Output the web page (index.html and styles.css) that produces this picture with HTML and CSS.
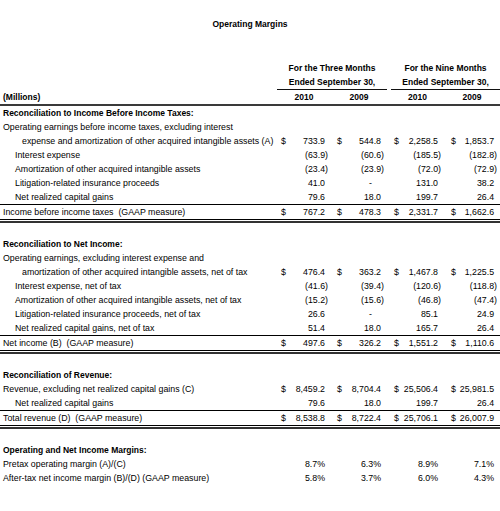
FILE: index.html
```html
<!DOCTYPE html>
<html lang="en">
<head>
    <meta charset="UTF-8">
    <meta name="viewport" content="width=device-width, initial-scale=1.0">
    <title>Operating Margins</title>
    <link rel="stylesheet" href="styles.css">
</head>
<body>
    <h1 class="title">Operating Margins</h1>

    <table class="margins">
        <colgroup>
            <col class="col-label">
            <col class="col-g1">
            <col class="col-g2">
            <col class="col-gap">
            <col class="col-g3">
            <col class="col-g4">
        </colgroup>
        <thead>
            <tr>
                <th></th>
                <th colspan="2" class="period">For the Three Months</th>
                <th></th>
                <th colspan="2" class="period">For the Nine Months</th>
            </tr>
            <tr>
                <th></th>
                <th colspan="2" class="period ended">Ended September 30,</th>
                <th></th>
                <th colspan="2" class="period ended">Ended September 30,</th>
            </tr>
            <tr class="years">
                <th class="label">(Millions)</th>
                <th>2010</th>
                <th>2009</th>
                <th></th>
                <th>2010</th>
                <th>2009</th>
            </tr>
        </thead>
        <tbody>
            <!-- Reconciliation to Income Before Income Taxes -->
            <tr class="section">
                <td class="label" colspan="6">Reconciliation to Income Before Income Taxes:</td>
            </tr>
            <tr>
                <td class="label" colspan="6">Operating earnings before income taxes, excluding interest</td>
            </tr>
            <tr>
                <td class="label wrap">expense and amortization of other acquired intangible assets (A)</td>
                <td class="v"><span class="cur">$</span>733.9</td>
                <td class="v"><span class="cur">$</span>544.8</td>
                <td></td>
                <td class="v"><span class="cur">$</span>2,258.5</td>
                <td class="v"><span class="cur">$</span>1,853.7</td>
            </tr>
            <tr>
                <td class="label sub">Interest expense</td>
                <td class="v neg">(63.9)</td>
                <td class="v neg">(60.6)</td>
                <td></td>
                <td class="v neg">(185.5)</td>
                <td class="v neg">(182.8)</td>
            </tr>
            <tr>
                <td class="label sub">Amortization of other acquired intangible assets</td>
                <td class="v neg">(23.4)</td>
                <td class="v neg">(23.9)</td>
                <td></td>
                <td class="v neg">(72.0)</td>
                <td class="v neg">(72.9)</td>
            </tr>
            <tr>
                <td class="label sub">Litigation-related insurance proceeds</td>
                <td class="v">41.0</td>
                <td class="v dash">-</td>
                <td></td>
                <td class="v">131.0</td>
                <td class="v">38.2</td>
            </tr>
            <tr>
                <td class="label sub">Net realized capital gains</td>
                <td class="v">79.6</td>
                <td class="v">18.0</td>
                <td></td>
                <td class="v">199.7</td>
                <td class="v">26.4</td>
            </tr>
            <tr class="total">
                <td class="label">Income before income taxes&nbsp; (GAAP measure)</td>
                <td class="v"><span class="cur">$</span>767.2</td>
                <td class="v"><span class="cur">$</span>478.3</td>
                <td></td>
                <td class="v"><span class="cur">$</span>2,331.7</td>
                <td class="v"><span class="cur">$</span>1,662.6</td>
            </tr>
            <tr class="double"><td></td><td></td><td></td><td></td><td></td><td></td></tr>

            <!-- Reconciliation to Net Income -->
            <tr class="section">
                <td class="label" colspan="6">Reconciliation to Net Income:</td>
            </tr>
            <tr>
                <td class="label" colspan="6">Operating earnings, excluding interest expense and</td>
            </tr>
            <tr>
                <td class="label wrap">amortization of other acquired intangible assets, net of tax</td>
                <td class="v"><span class="cur">$</span>476.4</td>
                <td class="v"><span class="cur">$</span>363.2</td>
                <td></td>
                <td class="v"><span class="cur">$</span>1,467.8</td>
                <td class="v"><span class="cur">$</span>1,225.5</td>
            </tr>
            <tr>
                <td class="label sub">Interest expense, net of tax</td>
                <td class="v neg">(41.6)</td>
                <td class="v neg">(39.4)</td>
                <td></td>
                <td class="v neg">(120.6)</td>
                <td class="v neg">(118.8)</td>
            </tr>
            <tr>
                <td class="label sub">Amortization of other acquired intangible assets, net of tax</td>
                <td class="v neg">(15.2)</td>
                <td class="v neg">(15.6)</td>
                <td></td>
                <td class="v neg">(46.8)</td>
                <td class="v neg">(47.4)</td>
            </tr>
            <tr>
                <td class="label sub">Litigation-related insurance proceeds, net of tax</td>
                <td class="v">26.6</td>
                <td class="v dash">-</td>
                <td></td>
                <td class="v">85.1</td>
                <td class="v">24.9</td>
            </tr>
            <tr>
                <td class="label sub">Net realized capital gains, net of tax</td>
                <td class="v">51.4</td>
                <td class="v">18.0</td>
                <td></td>
                <td class="v">165.7</td>
                <td class="v">26.4</td>
            </tr>
            <tr class="total">
                <td class="label">Net income (B)&nbsp; (GAAP measure)</td>
                <td class="v"><span class="cur">$</span>497.6</td>
                <td class="v"><span class="cur">$</span>326.2</td>
                <td></td>
                <td class="v"><span class="cur">$</span>1,551.2</td>
                <td class="v"><span class="cur">$</span>1,110.6</td>
            </tr>
            <tr class="double"><td></td><td></td><td></td><td></td><td></td><td></td></tr>

            <!-- Reconciliation of Revenue -->
            <tr class="section">
                <td class="label" colspan="6">Reconciliation of Revenue:</td>
            </tr>
            <tr>
                <td class="label">Revenue, excluding net realized capital gains (C)</td>
                <td class="v"><span class="cur">$</span>8,459.2</td>
                <td class="v"><span class="cur">$</span>8,704.4</td>
                <td></td>
                <td class="v"><span class="cur">$</span>25,506.4</td>
                <td class="v"><span class="cur">$</span>25,981.5</td>
            </tr>
            <tr>
                <td class="label sub">Net realized capital gains</td>
                <td class="v">79.6</td>
                <td class="v">18.0</td>
                <td></td>
                <td class="v">199.7</td>
                <td class="v">26.4</td>
            </tr>
            <tr class="total">
                <td class="label">Total revenue (D)&nbsp; (GAAP measure)</td>
                <td class="v"><span class="cur">$</span>8,538.8</td>
                <td class="v"><span class="cur">$</span>8,722.4</td>
                <td></td>
                <td class="v"><span class="cur">$</span>25,706.1</td>
                <td class="v"><span class="cur">$</span>26,007.9</td>
            </tr>
            <tr class="double"><td></td><td></td><td></td><td></td><td></td><td></td></tr>

            <!-- Margins -->
            <tr class="section">
                <td class="label" colspan="6">Operating and Net Income Margins:</td>
            </tr>
            <tr>
                <td class="label">Pretax operating margin (A)/(C)</td>
                <td class="v">8.7%</td>
                <td class="v">6.3%</td>
                <td></td>
                <td class="v">8.9%</td>
                <td class="v">7.1%</td>
            </tr>
            <tr>
                <td class="label">After-tax net income margin (B)/(D) (GAAP measure)</td>
                <td class="v">5.8%</td>
                <td class="v">3.7%</td>
                <td></td>
                <td class="v">6.0%</td>
                <td class="v">4.3%</td>
            </tr>
        </tbody>
    </table>
</body>
</html>
```

FILE: styles.css
```css
/* Base */
* {
    margin: 0;
    padding: 0;
}

body {
    background: #fff;
    color: #000;
    font-family: "Liberation Sans", Arial, sans-serif;
    font-size: 8.8px;
    width: 500px;
}

/* Title */
.title {
    font-size: 8.5px;
    font-weight: bold;
    text-align: center;
    line-height: 14px;
    margin: 17px 0 30px;
}

/* Table */
.margins {
    width: 500px;
    table-layout: fixed;
    border-collapse: separate;
    border-spacing: 0;
}

.col-label { width: 277px; }
.col-g1 { width: 54px; }
.col-g2 { width: 56px; }
.col-gap { width: 4px; }
.col-g3 { width: 53px; }
.col-g4 { width: 56px; }

.margins th,
.margins td {
    line-height: 14px;
    white-space: nowrap;
    vertical-align: middle;
}

/* Header */
.margins th {
    font-size: 8.5px;
    font-weight: bold;
    text-align: center;
}

.period.ended {
    border-bottom: 1px solid #111;
}

.years th {
    border-bottom: 2px solid #3a3a3a;
}

/* Row labels */
.margins .label {
    text-align: left;
    padding-left: 3px;
}

.margins .label.sub {
    padding-left: 15px;
}

.margins .label.wrap {
    padding-left: 22px;
}

.section .label {
    font-size: 8.5px;
    font-weight: bold;
}

/* Values */
.margins td.v {
    text-align: right;
    padding-right: 6px;
}

.margins td.v.neg {
    padding-right: 3px;
}

.margins td.v.dash {
    padding-right: 15px;
}

.v .cur {
    float: left;
}

.margins td.v:nth-child(2) { padding-left: 4px; }
.margins td.v:nth-child(3) { padding-left: 6px; }
.margins td.v:nth-child(5) { padding-left: 3px; }
.margins td.v:nth-child(6) { padding-left: 7px; }

/* Totals */
.total td {
    border-top: 1px solid #000;
    border-bottom: 1px solid #000;
}

.double td {
    height: 17px;
    background: linear-gradient(to bottom, #fff 0, #fff 1px, #333 1px, #333 3px, #fff 3px);
}
```
